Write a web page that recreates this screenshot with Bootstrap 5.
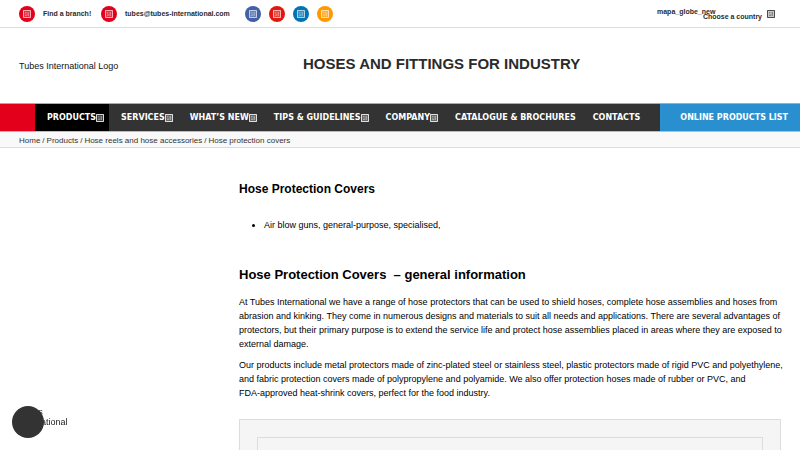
<!DOCTYPE html>
<html lang="en">
<head>
<meta charset="utf-8">
<meta name="viewport" content="width=device-width, initial-scale=1">
<title>Hose Protection Covers - Tubes International</title>
<link href="https://cdn.jsdelivr.net/npm/bootstrap@5.3.0/dist/css/bootstrap.min.css" rel="stylesheet">
<style>
body { font: 9px/14px "Liberation Sans", Arial, sans-serif; color: #000; background: #fff; overflow-x: hidden; }
a { color: inherit; text-decoration: none; }
.glyph { width: 8px; height: 8px; flex: none; }
.page-x { padding-left: 19px; padding-right: 19px; }
.top-strip { height: 28px; border-bottom: 1px solid #ddd; font-size: 7px; font-weight: 700; color: #2b2b2b; }
.contact-link, .socials { gap: 8px; }
.contacts { gap: 8px; }
.find { min-width: 74px; }
.mail { min-width: 136px; }
.dot { width: 16px; height: 16px; border-radius: 50%; background: #e2001a; color: #fff; flex: none; }
.dot .glyph { opacity: .8; }
.dot-fb { background: #4260a7; }
.dot-yt { background: #e3170f; }
.dot-in { background: #0274b3; }
.dot-rss { background: #ff9900; }
.country { background: none; border: 0; padding: 0 6px 0 0; font-weight: 700; color: #2b2b2b; line-height: 8px; gap: 5px; }
.country-text { width: 105px; height: 12px; }
.country-name { position: absolute; right: 0; bottom: -1px; }
.masthead { height: 75px; }
.brand { width: 284px; color: #111; }
.slogan { font-size: 15px; line-height: 20px; font-weight: 700; color: #2b2b2b; padding-bottom: 4px; }
.main-menu { height: 29px; background: #333; border-top: 1px solid #aaa; border-bottom: 1px solid #bbb; color: #fff; font: 700 8px/12px "DejaVu Sans", sans-serif; white-space: nowrap; }
.home-tile { width: 35px; flex: none; background: #e2001a; }
.menu-link { padding: 1px 5px 0 12px; }
.menu-link.current { background: #000; }
.menu-link .glyph { margin-bottom: 1px; }
.online { width: 140px; flex: none; background: #2a8fce; padding: 1px 12px 0 0; }
.crumbs { height: 16px; background: #f9f9f9; border-bottom: 1px solid #ddd; line-height: 17px; color: #333; }
.crumbs .breadcrumb { font-size: 8px; }
.crumbs .breadcrumb-item + .breadcrumb-item { padding-left: 2px; }
.crumbs .breadcrumb-item + .breadcrumb-item::before { padding-right: 2px; color: #333; }
.crumbs .breadcrumb-item.active { color: #333; }
.side { width: 220px; flex: none; }
.article { padding-top: 32px; min-width: 0; }
.article h1 { font-size: 12px; line-height: 18px; font-weight: 700; margin: 0 0 20px; }
.article ul { padding-left: 25px; margin: 0 0 34px; }
.article h2 { font-size: 13px; line-height: 18px; font-weight: 700; margin: 0 0 11px; }
.article p { margin: 0 -8px 7px 0; }
.panel { margin-top: 19px; padding: 17px; background: #f5f5f5; border: 1px solid #ddd; }
.panel-inner { height: 120px; border: 1px solid #ddd; }
.float-logo { position: fixed; left: 18px; bottom: 13px; width: 50px; line-height: 10px; color: #222; }
.float-disc { position: fixed; left: 12px; bottom: 12px; width: 32px; height: 32px; padding: 0; border: 0; border-radius: 50%; background: #333; }
</style>
<script src="https://cdn.jsdelivr.net/npm/bootstrap@5.3.0/dist/js/bootstrap.bundle.min.js"></script>
</head>
<body>
<svg class="d-none" aria-hidden="true">
  <symbol id="box" viewBox="0 0 8 8">
    <path d="M0 0h8v8H0z" fill="currentColor" opacity=".25"/>
    <path d="M.5 .5h7v7h-7z" fill="none" stroke="currentColor" opacity=".8"/>
    <path d="M2 2h1.500v1.500H2zM4.500 2h1.500v4H4.500zM2 4.500h2v1.500H2z" fill="currentColor" opacity=".4"/>
  </symbol>
</svg>

<div class="top-strip page-x d-flex align-items-center justify-content-between">
  <div class="contacts d-flex align-items-center">
    <a href="#" class="contact-link find d-flex align-items-center"><span class="dot d-flex align-items-center justify-content-center"><svg class="glyph"><use href="#box"/></svg></span>Find a branch!</a>
    <a href="#" class="contact-link mail d-flex align-items-center"><span class="dot d-flex align-items-center justify-content-center"><svg class="glyph"><use href="#box"/></svg></span>tubes@tubes-international.com</a>
    <div class="socials d-flex">
      <a href="#" aria-label="Facebook" class="dot dot-fb d-flex align-items-center justify-content-center"><svg class="glyph"><use href="#box"/></svg></a>
      <a href="#" aria-label="YouTube" class="dot dot-yt d-flex align-items-center justify-content-center"><svg class="glyph"><use href="#box"/></svg></a>
      <a href="#" aria-label="LinkedIn" class="dot dot-in d-flex align-items-center justify-content-center"><svg class="glyph"><use href="#box"/></svg></a>
      <a href="#" aria-label="News feed" class="dot dot-rss d-flex align-items-center justify-content-center"><svg class="glyph"><use href="#box"/></svg></a>
    </div>
  </div>
  <button type="button" class="country d-flex align-items-center">
    <span class="country-text position-relative text-start"><span class="d-block">mapa_globe_new</span><span class="country-name">Choose a country</span></span>
    <svg class="glyph"><use href="#box"/></svg>
  </button>
</div>

<header class="masthead page-x d-flex align-items-center">
  <a href="#" class="brand">Tubes International Logo</a>
  <div class="slogan">HOSES AND FITTINGS FOR INDUSTRY</div>
</header>

<nav class="main-menu d-flex align-items-stretch" aria-label="Main">
  <a href="#" class="home-tile" aria-label="Home"></a>
  <div class="d-flex flex-grow-1">
    <a href="#" class="menu-link current d-flex align-items-center">PRODUCTS<svg class="glyph"><use href="#box"/></svg></a>
    <a href="#" class="menu-link d-flex align-items-center">SERVICES<svg class="glyph"><use href="#box"/></svg></a>
    <a href="#" class="menu-link d-flex align-items-center">WHAT’S NEW<svg class="glyph"><use href="#box"/></svg></a>
    <a href="#" class="menu-link d-flex align-items-center">TIPS &amp; GUIDELINES<svg class="glyph"><use href="#box"/></svg></a>
    <a href="#" class="menu-link d-flex align-items-center">COMPANY<svg class="glyph"><use href="#box"/></svg></a>
    <a href="#" class="menu-link d-flex align-items-center">CATALOGUE &amp; BROCHURES</a>
    <a href="#" class="menu-link d-flex align-items-center">CONTACTS</a>
  </div>
  <a href="#" class="online d-flex align-items-center justify-content-end">ONLINE PRODUCTS LIST</a>
</nav>

<nav class="crumbs page-x" aria-label="Breadcrumb">
  <ol class="breadcrumb m-0 p-0">
    <li class="breadcrumb-item"><a href="#">Home</a></li>
    <li class="breadcrumb-item"><a href="#">Products</a></li>
    <li class="breadcrumb-item"><a href="#">Hose reels and hose accessories</a></li>
    <li class="breadcrumb-item active" aria-current="page">Hose protection covers</li>
  </ol>
</nav>

<div class="page-x d-flex">
  <aside class="side"></aside>
  <main class="article flex-grow-1">
    <h1>Hose Protection Covers</h1>
    <ul><li>Air blow guns, general-purpose, specialised,</li></ul>
    <h2>Hose Protection Covers&nbsp; – general information</h2>
    <p>At Tubes International we have a range of hose protectors that can be used to shield hoses, complete hose assemblies and hoses from abrasion and kinking. They come in numerous designs and materials to suit all needs and applications. There are several advantages of protectors, but their primary purpose is to extend the service life and protect hose assemblies placed in areas where they are exposed to external damage.</p>
    <p>Our products include metal protectors made of zinc-plated steel or stainless steel, plastic protectors made of rigid PVC and polyethylene, and fabric protection covers made of polypropylene and polyamide. We also offer protection hoses made of rubber or PVC, and<br>FDA-approved heat-shrink covers, perfect for the food industry.</p>
    <div class="panel"><div class="panel-inner"></div></div>
  </main>
</div>

<a href="#" class="float-logo">Tubes International Logo</a>
<button type="button" class="float-disc" aria-label="Open side panel"></button>
</body>
</html>
